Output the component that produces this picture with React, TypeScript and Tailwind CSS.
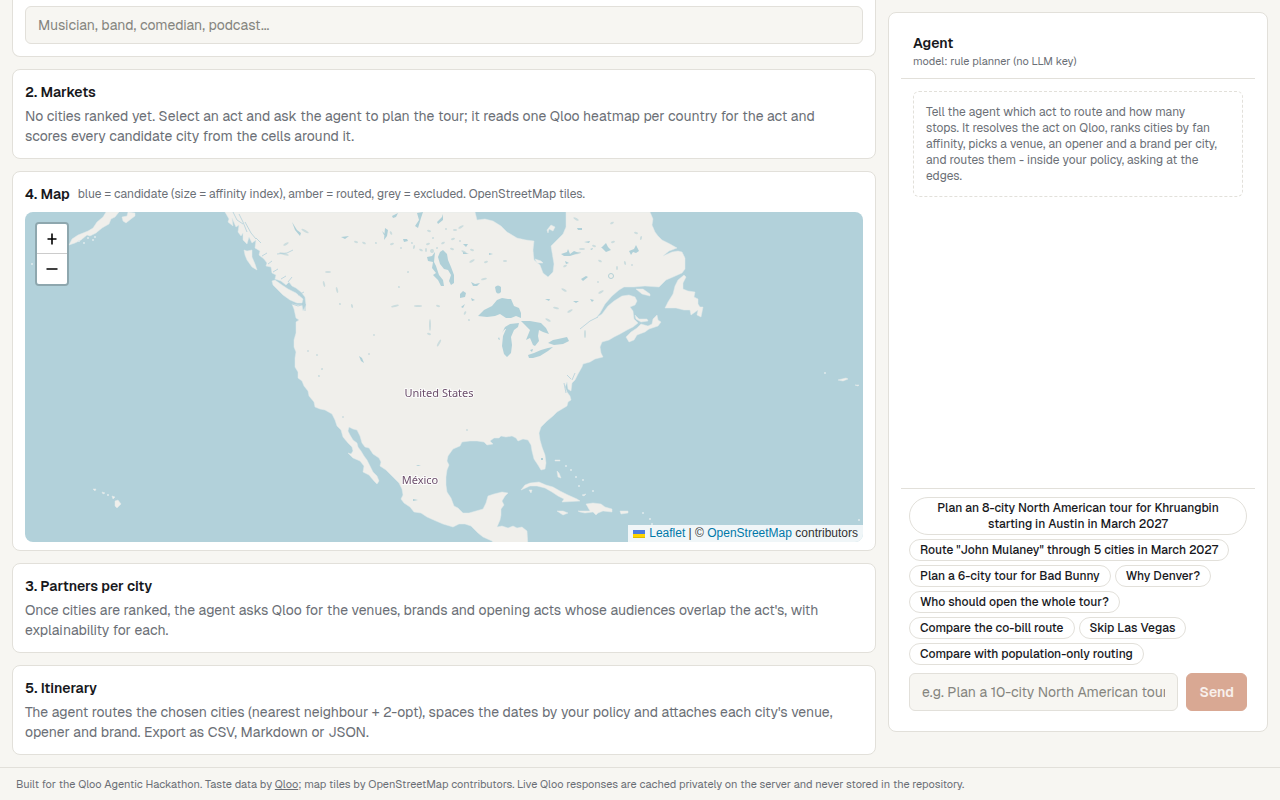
import clsx from "clsx";

const suggestions = [
  "Plan an 8-city North American tour for Khruangbin starting in Austin in March 2027",
  'Route "John Mulaney" through 5 cities in March 2027',
  "Plan a 6-city tour for Bad Bunny",
  "Why Denver?",
  "Who should open the whole tour?",
  "Compare the co-bill route",
  "Skip Las Vegas",
  "Compare with population-only routing",
];

const mainland =
  "M225 212 L229 219 L228 222 L233 226 L232 218 L236 227 L239 225 L238 232 L241 236 L243 233 L243 240 L247 244 L249 237 L252 243 L256 240 L255 248 L260 251 L259 255 L264 259 L267 263 L266 266 L271 267 L272 273 L276 275 L275 279 L281 281 L286 285 L289 282 L292 286 L296 288 L301 292 L305 297 L306 305 L303 311 L302 305 L297 305 L292 304 L294 309 L296 318 L299 320 L296 322 L296 333 L294 340 L294 347 L296 352 L295 358 L295 367 L298 372 L298 378 L302 381 L304 386 L308 391 L309 396 L314 402 L315 407 L320 409 L325 410 L332 414 L335 420 L337 426 L341 430 L343 437 L348 443 L352 447 L353 451 L351 454 L348 453 L353 458 L360 461 L364 466 L363 472 L369 475 L374 481 L377 484 L379 481 L377 476 L373 472 L370 466 L367 460 L364 456 L361 451 L358 447 L357 443 L353 440 L350 435 L348 431 L349 427 L353 429 L357 430 L360 436 L362 443 L365 447 L369 448 L373 454 L379 458 L381 462 L380 466 L386 470 L393 477 L399 483 L402 489 L403 495 L401 499 L404 503 L410 507 L414 512 L421 513 L427 517 L436 521 L443 524 L453 527 L459 524 L465 524 L471 526 L478 533 L483 537 L492 541 L495 546 L528 546 L527 531 L522 527 L517 528 L513 526 L508 528 L502 526 L497 527 L500 520 L501 515 L501 509 L504 505 L502 501 L505 496 L508 493 L502 492 L494 494 L488 496 L486 503 L483 509 L476 511 L469 513 L463 513 L458 508 L454 506 L451 498 L447 492 L446 485 L446 477 L447 470 L449 465 L447 461 L448 456 L453 449 L460 446 L462 442 L470 441 L477 441 L484 442 L487 445 L493 444 L490 441 L494 438 L499 438 L501 436 L506 437 L512 436 L516 438 L518 441 L523 439 L528 440 L531 445 L532 451 L534 459 L538 465 L541 470 L545 469 L546 463 L545 455 L542 447 L540 440 L539 433 L541 427 L547 421 L553 416 L557 412 L562 409 L567 406 L568 402 L571 400 L570 396 L567 392 L565 387 L567 382 L568 389 L571 391 L572 383 L575 380 L578 374 L582 367 L583 364 L590 362 L595 359 L603 357 L601 353 L600 347 L602 342 L609 340 L614 337 L620 334 L627 330 L633 327 L638 323 L634 319 L633 311 L630 307 L635 305 L637 301 L635 297 L629 295 L622 296 L614 301 L608 306 L602 314 L596 318 L600 313 L605 304 L612 296 L619 290 L624 287 L634 287 L645 286 L659 287 L666 280 L673 277 L682 273 L685 269 L685 258 L682 252 L678 251 L672 252 L663 256 L669 251 L677 248 L670 244 L662 240 L658 236 L655 232 L652 225 L653 219 L650 212 L566 212 L566 227 L563 234 L557 240 L551 246 L553 258 L554 264 L553 272 L548 277 L543 273 L540 265 L534 260 L533 250 L534 241 L526 240 L517 238 L507 232 L501 226 L493 221 L485 219 L477 220 L475 212 Z";

const islands = [
  // Vancouver Island and Haida Gwaii
  "M272 281 L275 280 L282 285 L288 289 L296 293 L303 299 L302 303 L297 303 L290 300 L283 295 L277 289 L273 285 Z",
  "M244 250 L247 251 L252 250 L252 257 L255 264 L257 270 L252 267 L247 260 L245 255 Z",
  // Alaska peninsula and Kodiak
  "M69 245 L72 239 L78 235 L83 233 L88 231 L93 228 L97 222 L103 217 L106 212 L119 212 L115 217 L111 219 L109 224 L102 228 L96 233 L90 236 L87 235 L81 240 L75 243 Z",
  "M122 217 L127 216 L128 212 L135 213 L135 216 L131 219 L126 223 L123 221 Z",
  // Maritimes
  "M626 337 L631 332 L637 328 L641 324 L648 326 L652 324 L653 319 L657 315 L658 320 L661 322 L658 326 L649 329 L645 332 L637 335 L634 340 L629 342 Z",
  "M635 315 L639 319 L647 319 L648 321 L641 322 L636 319 Z",
  "M636 289 L643 289 L650 294 L650 296 L642 294 Z",
  "M684 275 L686 277 L683 283 L683 289 L688 291 L695 292 L694 297 L698 299 L698 304 L700 307 L703 307 L701 317 L697 315 L698 310 L691 315 L690 310 L684 310 L676 308 L665 308 L668 302 L673 294 L675 286 L678 280 Z",
  // Caribbean
  "M521 490 L525 485 L530 483 L539 482 L546 485 L553 487 L560 491 L568 495 L577 499 L580 501 L562 502 L564 499 L558 496 L552 492 L545 488 L537 486 L530 486 Z",
  "M557 511 L563 511 L568 513 L563 515 Z",
  "M578 511 L590 511 L586 504 L593 503 L601 504 L605 507 L612 509 L612 512 L603 511 L598 513 L596 515 L593 512 L585 513 L580 512 Z",
  "M620 511 L628 511 L628 513 L621 514 Z",
  "M557 471 L559 473 L561 478 L558 477 Z",
  "M555 460 L560 460 L560 461 L555 461 Z",
  "M582 495 L586 494 L584 496 Z",
  "M529 490 L532 490 L531 493 Z",
  // Hawaii
  "M115 501 L118 500 L121 504 L117 508 L115 506 Z",
  "M112 496 L115 497 L113 499 Z",
  "M102 492 L105 493 L103 494 Z",
  "M93 489 L96 489 L95 491 Z",
  // Akimiski and Belcher
  "M535 259 L541 261 L543 263 L537 263 Z",
  "M547 230 L551 225 L555 227 L553 231 L549 229 L548 233 Z",
  "M838 380 L842 379 L846 378 L848 379 L843 381 Z",
  "M855 385 L859 385 L858 386 Z",
];

const lakes = [
  "M478 316 L484 310 L492 306 L497 300 L502 298 L508 299 L511 299 L514 306 L519 308 L521 313 L521 318 L516 316 L511 318 L506 318 L500 314 L495 316 L487 317 Z",
  "M519 323 L510 324 L505 327 L502 333 L504 330 L506 329 L503 336 L502 346 L504 354 L507 357 L511 353 L512 345 L511 337 L514 330 L518 327 Z",
  "M521 321 L530 321 L541 323 L546 328 L549 334 L543 332 L539 330 L538 336 L539 341 L535 346 L533 345 L530 338 L526 340 L528 335 L530 330 L525 325 Z",
  "M528 355 L534 353 L541 350 L548 348 L553 347 L548 351 L540 356 L533 358 L529 358 Z",
  "M548 343 L553 340 L558 339 L567 337 L569 341 L563 344 L554 345 Z",
  "M495 287 Q498 284 501 287 L501 292 Q498 295 496 292 Z",
  "M440 252 L443 250 L447 254 L448 260 L451 267 L454 275 L454 283 L451 285 L449 281 L451 275 L448 270 L444 269 L440 264 L438 257 Z",
  "M427 257 L432 256 L435 252 L434 262 L436 266 L439 275 L443 280 L444 286 L441 286 L438 280 L433 275 L436 273 L432 268 L433 262 L428 261 Z",
  "M417 213 L423 212 L421 218 L418 228 L415 226 L419 220 Z",
  "M437 222 L442 217 L443 214 L443 220 L438 224 Z",
  "M385 228 L388 230 L387 236 L384 240 Z",
  "M392 216 L398 213 L396 217 L393 218 Z",
  "M403 239 L407 239 L408 241 L404 242 Z",
  "M460 294 L463 291 L466 293 L465 297 L460 298 Z",
  "M461 307 L465 304 L463 308 Z",
  "M471 282 L475 284 L480 283 L477 286 L473 286 Z",
  "M463 252 L469 254 L463 254 Z",
  "M489 253 L493 254 L489 255 Z",
  "M463 244 L468 244 L466 247 Z",
  "M471 298 L475 300 L472 301 Z",
  "M382 231 L387 236 L384 235 Z",
  "M341 237 L349 236 L345 239 Z",
  "M292 222 L297 230 L301 233 L300 236 L295 230 Z",
  "M359 356 L362 358 L364 363 L361 361 Z",
  "M561 254 L567 252 L568 249 L570 254 L574 251 L579 253 L570 256 L564 256 Z",
  "M602 247 L606 243 L608 247 L611 250 L606 252 L601 247 Z",
  "M629 251 L634 249 L636 245 L639 251 L636 253 L633 252 L631 255 Z",
  "M581 279 L586 276 L588 277 L583 281 Z",
  "M577 228 L582 228 L582 230 L578 230 Z",
  "M584 242 L590 241 L589 243 Z",
  "M590 249 L593 248 L592 250 Z",
  "M573 301 L579 301 L576 303 Z",
  "M590 299 L594 300 L592 302 Z",
  "M545 299 L550 299 L549 301 Z",
  "M565 261 L569 263 L566 264 Z",
  "M541 458 L543 458 L543 460 L541 460 Z",
  "M413 499 L418 500 L413 501 Z",
  "M416 465 L421 465 L418 466 Z",
  "M530 350 L533 349 L532 352 Z",
  "M499 337 L500 340 L498 339 Z",
];

// small lakes and reservoirs: x, y, rx, ry
const ponds = [
  [391, 233, 1, 2], [392, 244, 2, 1], [401, 248, 1, 1], [414, 247, 1, 2], [421, 250, 2, 1],
  [412, 243, 1, 1], [428, 244, 2, 1], [426, 250, 1, 2], [432, 251, 2, 2], [437, 248, 1, 1],
  [443, 243, 2, 1], [453, 239, 2, 1], [460, 241, 1, 1], [452, 249, 2, 1], [464, 252, 3, 1],
  [461, 227, 3, 1], [446, 229, 1, 1], [455, 230, 2, 1], [429, 231, 2, 1], [433, 238, 1, 1],
  [472, 261, 3, 1], [486, 262, 2, 1], [505, 261, 2, 1], [472, 250, 2, 1], [408, 272, 1, 1],
  [399, 287, 1, 1], [395, 306, 4, 1], [418, 306, 4, 1], [438, 306, 2, 1], [465, 313, 1, 2],
  [469, 320, 1, 1], [484, 279, 3, 1], [430, 325, 1, 6], [429, 334, 2, 1], [439, 343, 1, 4],
  [340, 304, 1, 1], [352, 306, 1, 2], [308, 351, 1, 1], [317, 355, 1, 1], [322, 369, 1, 1],
  [319, 376, 1, 1], [374, 335, 1, 1], [369, 354, 1, 1], [356, 242, 2, 1], [364, 243, 2, 1],
  [376, 243, 1, 1], [337, 290, 1, 3], [328, 272, 3, 1], [284, 254, 5, 1], [305, 231, 4, 1],
  [286, 244, 3, 1], [324, 284, 1, 3], [343, 417, 1, 1], [467, 430, 1, 1],
  [576, 219, 3, 1], [612, 223, 2, 1], [578, 253, 3, 1], [582, 249, 3, 1], [594, 246, 2, 1],
  [600, 261, 2, 1], [565, 266, 2, 1], [625, 263, 1, 2], [632, 265, 1, 1], [636, 233, 2, 1],
  [564, 290, 3, 1], [601, 292, 3, 1], [598, 282, 1, 1], [585, 334, 1, 4], [556, 308, 3, 1],
  [548, 320, 3, 1], [570, 311, 3, 1], [613, 242, 2, 1], [617, 268, 1, 2], [641, 238, 1, 2],
];

const islets = [
  [79, 241, 1], [88, 238, 1], [93, 240, 1], [84, 243, 1], [95, 237, 1], [32, 264, 1],
  [571, 470, 1], [576, 477, 1], [579, 486, 1], [593, 491, 1], [566, 466, 1], [583, 480, 1],
  [643, 513, 1], [650, 519, 1], [652, 524, 1], [825, 373, 1], [859, 520, 1], [108, 495, 1],
];

function FanMap() {
  return (
    <svg
      viewBox="25 212 838 330"
      preserveAspectRatio="xMidYMid slice"
      className="block h-full w-full"
      role="img"
      aria-label="Map of North America"
    >
      <rect x="-400" y="212" width="1700" height="330" fill="#b2d1da" />
      <g fill="#f0efeb" stroke="#e3ebea" strokeWidth="0.5" strokeLinejoin="round">
        <path d={mainland} />
        {islands.map((d) => (
          <path key={d} d={d} />
        ))}
      </g>
      <g fill="#dfeaec">
        {islets.map(([x, y, r]) => (
          <circle key={`${x}-${y}`} cx={x} cy={y} r={r} />
        ))}
      </g>
      <g fill="#afd0d8">
        {lakes.map((d) => (
          <path key={d} d={d} />
        ))}
      </g>
      <circle cx="611" cy="276" r="2.5" fill="none" stroke="#b4d1d6" />
      <g fill="#b4d1d6" opacity="0.6">
        {ponds.map(([x, y, rx, ry], i) => (
          <ellipse key={i} cx={x} cy={y} rx={rx} ry={ry} transform={`rotate(${(i % 5) * 14 - 28} ${x} ${y})`} />
        ))}
      </g>
      {/* inlets of the west coast and the St Lawrence */}
      <g fill="none" stroke="#b2d1da" strokeWidth="0.8">
        <path d="M233 212 L237 220 L243 224 M239 214 L243 222 L247 232 M245 222 L251 233 L256 239 M256 238 L261 243 M262 256 L267 253 M268 264 L272 261 M273 272 L278 269 M281 279 L286 276 M288 282 L292 277 M277 254 L287 253 L293 250 M298 295 L304 292 M566 393 L564 383 M598 317 L590 321 L580 329 M575 373 L572 380 M567 375 L571 379" />
        <path d="M292 304 L298 306 L305 304 L305 311" />
      </g>
      <g
        className="font-['Noto_Sans'] text-[11px]"
        fill="#6b4d6b"
        stroke="#ffffff"
        strokeOpacity="0.8"
        strokeWidth="2"
        paintOrder="stroke"
        textAnchor="middle"
      >
        <text x="439" y="397">United States</text>
        <text x="420" y="484">México</text>
      </g>
    </svg>
  );
}

function Card({ title, children }) {
  return (
    <section className="rounded-lg border border-[#e2e0da] bg-white p-3">
      <h2 className="text-sm font-semibold">{title}</h2>
      <p className="mt-1 pr-1 text-sm text-[#6b6f76]">{children}</p>
    </section>
  );
}

function MapCard() {
  return (
    <section className="rounded-lg border border-[#e2e0da] bg-white px-3 pt-3 pb-2">
      <div className="flex items-center gap-2">
        <h2 className="text-sm font-semibold">4. Map</h2>
        <span className="text-xs text-[#6b6f76]">
          blue = candidate (size = affinity index), amber = routed, grey = excluded. OpenStreetMap tiles.
        </span>
      </div>
      <div className="relative mt-2 h-[330px] overflow-hidden rounded-lg">
        <FanMap />
        <div className="absolute top-2.5 left-2.5 flex flex-col overflow-hidden rounded border-2 border-black/20 bg-clip-padding text-black">
          <button
            type="button"
            aria-label="Zoom in"
            className="flex h-[30px] w-[30px] items-center justify-center border-b border-[#ccc] bg-white"
          >
            <svg viewBox="0 0 12 12" className="h-3 w-3" stroke="currentColor" strokeWidth="1.6" aria-hidden="true">
              <path d="M1.5 6h9M6 0.5v11" />
            </svg>
          </button>
          <button
            type="button"
            aria-label="Zoom out"
            className="flex h-[30px] w-[30px] items-center justify-center bg-white"
          >
            <svg viewBox="0 0 12 12" className="h-3 w-3" stroke="currentColor" strokeWidth="1.6" aria-hidden="true">
              <path d="M0.5 6h11" />
            </svg>
          </button>
        </div>
        <div className="absolute right-0 bottom-0 flex items-center gap-1 bg-white/80 px-[5px] font-['Liberation_Sans',Arial,sans-serif] text-xs leading-[17px] text-[#333]">
          <svg viewBox="0 0 12 8" className="h-2 w-3" aria-hidden="true">
            <path fill="#4C7BE1" d="M0 0h12v4H0z" />
            <path fill="#FFD500" d="M0 4h12v3H0z" />
            <path fill="#E0BC00" d="M0 7h12v1H0z" />
          </svg>
          <span>
            <a href="#leaflet" className="text-[#0078a8]">Leaflet</a> | ©{" "}
            <a href="#osm" className="text-[#0078a8]">OpenStreetMap</a> contributors
          </span>
        </div>
      </div>
    </section>
  );
}

function AgentPanel() {
  return (
    <aside className="sticky top-3 mt-3 flex h-[720px] flex-col rounded-lg border border-[#e2e0da] bg-white p-3">
      <header className="border-b border-[#e2e0da] px-3 pt-2 pb-[9px]">
        <h2 className="text-sm font-semibold">Agent</h2>
        <p className="text-[11px] leading-4 text-[#6b6f76]">model: rule planner (no LLM key)</p>
      </header>
      <div className="flex-1 overflow-y-auto p-3">
        <p className="rounded-md border border-dashed border-[#e2e0da] p-3 text-xs text-[#6b6f76]">
          Tell the agent which act to route and how many
          <br />
          stops. It resolves the act on Qloo, ranks cities by fan affinity, picks a venue, an opener and a brand per
          city, and routes them - inside your policy, asking at the edges.
        </p>
      </div>
      <div className="border-t border-[#e2e0da] p-2">
        <div className="flex flex-wrap gap-1">
          {suggestions.map((text, i) => (
            <button
              key={text}
              type="button"
              className={clsx(
                "rounded-full border border-[#e2e0da] py-0.5 text-xs font-medium",
                i === 0 ? "px-5" : "px-2.5"
              )}
            >
              {text}
            </button>
          ))}
        </div>
        <form className="mt-2 flex gap-2" onSubmit={(e) => e.preventDefault()}>
          <input
            aria-label="Message the agent"
            placeholder="e.g. Plan a 10-city North American tour"
            className="h-[38px] min-w-0 flex-1 rounded-md border border-[#e2e0da] bg-[#f7f6f2] px-3 text-sm placeholder:text-[#85857f]"
          />
          <button
            type="submit"
            className="h-[38px] rounded-md border border-[#d9a893] bg-[#d9a893] px-3 text-sm font-semibold text-[#f8f0ec]"
          >
            Send
          </button>
        </form>
      </div>
    </aside>
  );
}

export default function App() {
  return (
    <div className="min-h-screen bg-[#f7f6f2] font-['Geist','Inter',sans-serif] text-[#17181c]">
      <div className="grid grid-cols-[minmax(0,1fr)_380px] items-start gap-3 px-3 pb-3">
        <main className="flex flex-col gap-3">
          <section className="rounded-b-lg border border-t-0 border-[#e2e0da] bg-white px-3 pt-1.5 pb-3">
            <input
              aria-label="Search for an act"
              placeholder="Musician, band, comedian, podcast..."
              className="block h-[38px] w-full rounded-md border border-[#e2e0da] bg-[#f7f6f2] px-3 text-sm placeholder:text-[#85857f]"
            />
          </section>
          <Card title="2. Markets">
            No cities ranked yet. Select an act and ask the agent to plan the tour; it reads one Qloo heatmap per
            country for the act and scores every candidate city from the cells around it.
          </Card>
          <MapCard />
          <Card title="3. Partners per city">
            Once cities are ranked, the agent asks Qloo for the venues, brands and opening acts whose audiences
            overlap the act's, with explainability for each.
          </Card>
          <Card title="5. Itinerary">
            The agent routes the chosen cities (nearest neighbour + 2-opt), spaces the dates by your policy and
            attaches each city's venue, opener and brand. Export as CSV, Markdown or JSON.
          </Card>
        </main>
        <AgentPanel />
      </div>
      <footer className="border-t border-[#e2e0da] px-4 py-2 text-[11px] leading-4 text-[#6b6f76]">
        Built for the Qloo Agentic Hackathon. Taste data by{" "}
        <a href="#qloo" className="underline">Qloo</a>; map tiles by OpenStreetMap contributors. Live Qloo responses
        are cached privately on the server and never stored in the repository.
      </footer>
    </div>
  );
}
